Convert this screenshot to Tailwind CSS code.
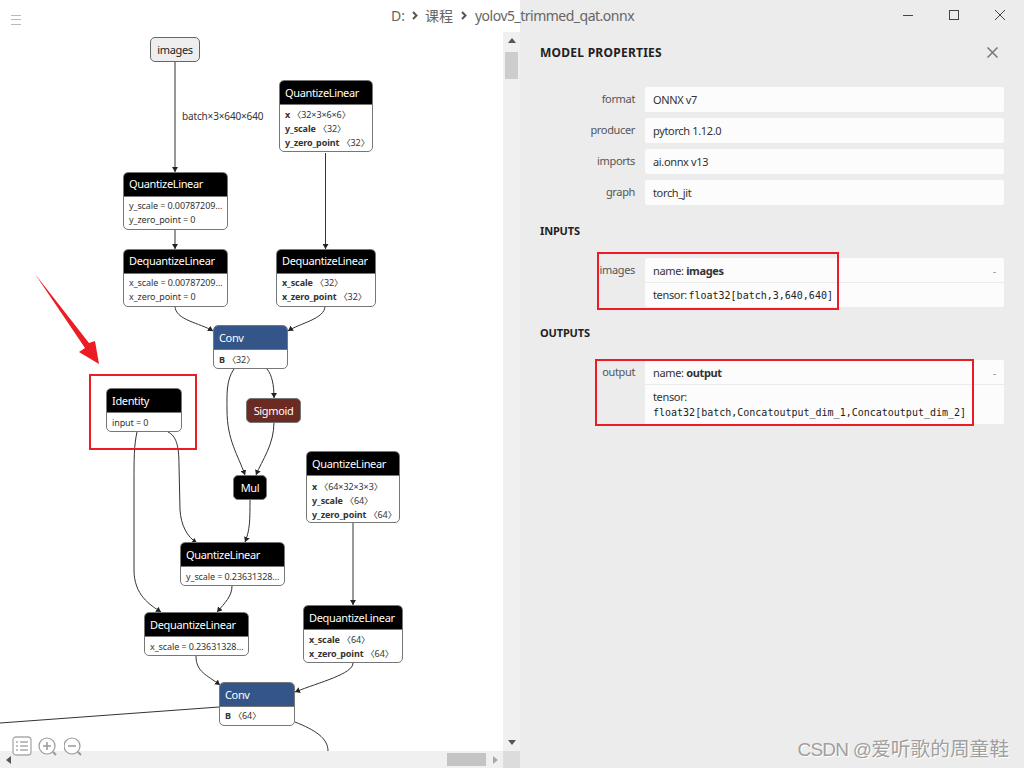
<!DOCTYPE html>
<html lang="en">
<head>
    <meta charset="UTF-8">
    <title>yolov5_trimmed_qat.onnx</title>
    <script src="https://cdn.jsdelivr.net/npm/@tailwindcss/browser@4"></script>
</head>
<body class="bg-white">
    <div class="relative flex w-[1024px] h-[768px] overflow-hidden font-['Noto_Sans','Noto_Sans_CJK_SC',sans-serif] text-[11px] tracking-[-0.35px] text-[#333]">

        <!-- left: graph + scrollbars -->
        <div class="relative flex flex-col w-[520px] h-full bg-white">
            <div class="flex flex-1 min-h-0">
                <div class="relative flex-1 overflow-hidden">
                    <svg class="absolute inset-0" width="503" height="751" fill="none" stroke="#333" stroke-width="1">
                        <defs>
                            <marker id="tip" markerWidth="6" markerHeight="6" refX="5" refY="3" orient="auto" markerUnits="userSpaceOnUse">
                                <path d="M0 0 L5 3 L0 6 Z" fill="#222" stroke="none"/>
                            </marker>
                        </defs>
                        <path marker-end="url(#tip)" d="M175 62 L175 172"/>
                        <path marker-end="url(#tip)" d="M175 229 L175 249"/>
                        <path marker-end="url(#tip)" d="M325.500 153 L325.500 249"/>
                        <path marker-end="url(#tip)" d="M175 306 C175 320 200 323 213 331"/>
                        <path marker-end="url(#tip)" d="M325 306 C325 319 300 323 288 331"/>
                        <path marker-end="url(#tip)" d="M234 369 C226 380 227 395 227 410 C227 440 238 455 245 475"/>
                        <path marker-end="url(#tip)" d="M267 369 C272 375 274 385 274 398"/>
                        <path marker-end="url(#tip)" d="M274 422 C274 445 262 460 256 475"/>
                        <path marker-end="url(#tip)" d="M250 499 C250 520 250 530 245 542"/>
                        <path marker-end="url(#tip)" d="M168 432 C176 436 179 445 179 465 L180 510 C181 525 187 537 197 543"/>
                        <path marker-end="url(#tip)" d="M137 432 C134 445 134 460 134 480 L134 570 C134 595 150 605 161 612"/>
                        <path marker-end="url(#tip)" d="M232 586 C232 596 225 603 217 612"/>
                        <path marker-end="url(#tip)" d="M353 523 L353 605"/>
                        <path marker-end="url(#tip)" d="M196 656 C196 672 207 675 220 685"/>
                        <path marker-end="url(#tip)" d="M353 663 C353 674 320 682 295 692"/>
                        <path d="M0 723 L219 707"/>
                        <path d="M295 722 C315 730 328 738 328 751"/>
                    </svg>

                    <span class="absolute left-[182px] top-[109px] text-[10px] tracking-[-0.15px] leading-[14px] whitespace-nowrap">batch×3×640×640</span>

                    <div class="absolute left-[150px] top-[37px] w-[50px] h-[25px] pt-[2px] flex items-center justify-center rounded-[5px] border border-[#666] bg-[#eee] text-[#222]">images</div>

                    <!-- QuantizeLinear -->
                    <div class="absolute left-[123px] top-[172px] w-[105px] rounded-[5px] border border-[#777] bg-white overflow-hidden">
                        <div class="h-[23px] bg-black text-white px-[5px] leading-[22px] border-b border-[#777] box-content">QuantizeLinear</div>
                        <div class="px-[5px] py-[2px] text-[9px] tracking-[-0.1px] leading-[14px] whitespace-nowrap">y_scale = 0.00787209…<br>y_zero_point = 0</div>
                    </div>
                    <div class="absolute left-[123px] top-[249px] w-[105px] rounded-[5px] border border-[#777] bg-white overflow-hidden">
                        <div class="h-[23px] bg-black text-white px-[5px] leading-[22px] border-b border-[#777] box-content">DequantizeLinear</div>
                        <div class="px-[5px] py-[2px] text-[9px] tracking-[-0.1px] leading-[14px] whitespace-nowrap">x_scale = 0.00787209…<br>x_zero_point = 0</div>
                    </div>
                    <div class="absolute left-[279px] top-[80px] w-[94px] rounded-[5px] border border-[#777] bg-white overflow-hidden">
                        <div class="h-[23px] bg-black text-white px-[5px] leading-[24px] border-b border-[#777] box-content">QuantizeLinear</div>
                        <div class="px-[5px] pt-[3px] pb-[1px] text-[9px] tracking-[-0.1px] leading-[14px] whitespace-nowrap"><b>x</b> 〈32×3×6×6〉<br><b>y_scale</b> 〈32〉<br><b>y_zero_point</b> 〈32〉</div>
                    </div>
                    <div class="absolute left-[276px] top-[249px] w-[100px] rounded-[5px] border border-[#777] bg-white overflow-hidden">
                        <div class="h-[23px] bg-black text-white px-[5px] leading-[22px] border-b border-[#777] box-content">DequantizeLinear</div>
                        <div class="px-[5px] py-[2px] text-[9px] tracking-[-0.1px] leading-[14px] whitespace-nowrap"><b>x_scale</b> 〈32〉<br><b>x_zero_point</b> 〈32〉</div>
                    </div>

                    <div class="absolute left-[213px] top-[325px] w-[75px] rounded-[5px] border border-[#777] bg-white overflow-hidden">
                        <div class="h-[23px] bg-[#335588] text-white px-[5px] leading-[24px] border-b border-[#777] box-content">Conv</div>
                        <div class="px-[5px] pt-[3px] pb-[1px] text-[9px] tracking-[-0.1px] leading-[14px] whitespace-nowrap"><b>B</b> 〈32〉</div>
                    </div>

                    <div class="absolute left-[106px] top-[388px] w-[76px] rounded-[5px] border border-[#777] bg-white overflow-hidden">
                        <div class="h-[23px] bg-black text-white px-[5px] leading-[24px] border-b border-[#777] box-content">Identity</div>
                        <div class="px-[5px] pt-[3px] pb-[1px] text-[9px] tracking-[-0.1px] leading-[14px] whitespace-nowrap">input = 0</div>
                    </div>

                    <div class="absolute left-[246px] top-[398px] w-[55px] h-[25px] pt-[2px] flex items-center justify-center rounded-[5px] border border-[#777] bg-[#6b2a22] text-white">Sigmoid</div>
                    <div class="absolute left-[233px] top-[475px] w-[34px] h-[25px] pt-[2px] flex items-center justify-center rounded-[5px] border border-[#777] bg-black text-white">Mul</div>

                    <div class="absolute left-[306px] top-[451px] w-[94px] rounded-[5px] border border-[#777] bg-white overflow-hidden">
                        <div class="h-[23px] bg-black text-white px-[5px] leading-[24px] border-b border-[#777] box-content">QuantizeLinear</div>
                        <div class="px-[5px] pt-[4px] text-[9px] tracking-[-0.1px] leading-[14px] whitespace-nowrap"><b>x</b> 〈64×32×3×3〉<br><b>y_scale</b> 〈64〉<br><b>y_zero_point</b> 〈64〉</div>
                    </div>
                    <div class="absolute left-[180px] top-[542px] w-[105px] rounded-[5px] border border-[#777] bg-white overflow-hidden">
                        <div class="h-[23px] bg-black text-white px-[5px] leading-[24px] border-b border-[#777] box-content">QuantizeLinear</div>
                        <div class="px-[5px] pt-[3px] pb-[1px] text-[9px] tracking-[-0.1px] leading-[14px] whitespace-nowrap">y_scale = 0.23631328…</div>
                    </div>
                    <div class="absolute left-[144px] top-[612px] w-[105px] rounded-[5px] border border-[#777] bg-white overflow-hidden">
                        <div class="h-[23px] bg-black text-white px-[5px] leading-[24px] border-b border-[#777] box-content">DequantizeLinear</div>
                        <div class="px-[5px] pt-[3px] pb-[1px] text-[9px] tracking-[-0.1px] leading-[14px] whitespace-nowrap">x_scale = 0.23631328…</div>
                    </div>
                    <div class="absolute left-[303px] top-[605px] w-[100px] rounded-[5px] border border-[#777] bg-white overflow-hidden">
                        <div class="h-[23px] bg-black text-white px-[5px] leading-[24px] border-b border-[#777] box-content">DequantizeLinear</div>
                        <div class="px-[5px] pt-[3px] pb-[1px] text-[9px] tracking-[-0.1px] leading-[14px] whitespace-nowrap"><b>x_scale</b> 〈64〉<br><b>x_zero_point</b> 〈64〉</div>
                    </div>
                    <div class="absolute left-[219px] top-[682px] w-[76px] rounded-[5px] border border-[#777] bg-white overflow-hidden">
                        <div class="h-[23px] bg-[#335588] text-white px-[5px] leading-[24px] border-b border-[#777] box-content">Conv</div>
                        <div class="px-[5px] py-[2px] text-[9px] tracking-[-0.1px] leading-[14px] whitespace-nowrap"><b>B</b> 〈64〉</div>
                    </div>
                </div>

                <!-- vertical scrollbar -->
                <div class="w-[17px] pt-8 flex flex-col">
                    <div class="flex-1 bg-[#f0f0f0] flex flex-col items-center relative">
                        <svg class="mt-[6px]" width="8" height="5"><path d="M0 5 L4 0 L8 5 Z" fill="#555"/></svg>
                        <div class="mt-[9px] w-[13px] h-[27px] bg-[#cdcdcd]"></div>
                        <svg class="mt-auto mb-[6px]" width="8" height="5"><path d="M0 0 L4 5 L8 0 Z" fill="#555"/></svg>
                    </div>
                </div>
            </div>

            <!-- horizontal scrollbar -->
            <div class="h-[17px] flex bg-[#f0f0f0] items-center">
                <svg class="ml-[6px]" width="5" height="8"><path d="M5 0 L0 4 L5 8 Z" fill="#555"/></svg>
                <div class="ml-[436px] w-[39px] h-[13px] bg-[#c4c4c4]"></div>
                <svg class="ml-[7px]" width="5" height="8"><path d="M0 0 L5 4 L0 8 Z" fill="#a8a8a8"/></svg>
                <div class="ml-auto w-[17px] h-full bg-[#dcdcdc]"></div>
            </div>

            <!-- menu + zoom buttons -->
            <svg class="absolute left-[10px] top-[14px]" width="13" height="12" fill="none" stroke="#bbb" stroke-width="1"><path d="M1 1.500 H11 M1 5.500 H11 M1 10.500 H11"/></svg>
            <div class="absolute left-[12px] top-[736px] flex gap-[6px]">
                <svg width="20" height="20" fill="#fff" stroke="#aaa" stroke-width="1.300"><rect x="1" y="1" width="18" height="18" rx="3"/><path stroke="#aaa" stroke-width="1.500" d="M4 6 H6 M8 6 H16 M4 10 H6 M8 10 H16 M4 14 H6 M8 14 H16"/></svg>
                <svg width="20" height="20" fill="#fff" stroke="#999" stroke-width="1.200"><circle cx="9" cy="10" r="8"/><path stroke-width="1.500" d="M5 10 H13 M9 6 V14"/><path stroke-width="2" d="M15 16 L18 19"/></svg>
                <svg width="20" height="20" fill="#fff" stroke="#999" stroke-width="1.200"><circle cx="8" cy="10" r="8"/><path stroke-width="1.500" d="M4 10 H12"/><path stroke-width="2" d="M14 16 L17 19"/></svg>
            </div>
        </div>

        <!-- right: model properties -->
        <div class="flex flex-col flex-1 bg-[#ececec] pt-[43px] pl-5 pr-5">
            <div class="flex items-center justify-between h-[18px] mb-[26px] pr-[6px]">
                <span class="pt-[2px] font-bold text-[12px] tracking-[0.25px] text-[#222]">MODEL PROPERTIES</span>
                <svg width="11" height="11" fill="none" stroke="#777" stroke-width="1.500"><path d="M0.500 0.500 L10.500 10.500 M10.500 0.500 L0.500 10.500"/></svg>
            </div>

            <div class="flex flex-col gap-[6px]">
                <div class="flex gap-[10px]">
                    <div class="w-[95px] text-right leading-[24px] text-[#555]">format</div>
                    <div class="flex-1 h-[25px] rounded-[2px] bg-[#fcfcfc] px-2 leading-[25px]">ONNX v7</div>
                </div>
                <div class="flex gap-[10px]">
                    <div class="w-[95px] text-right leading-[24px] text-[#555]">producer</div>
                    <div class="flex-1 h-[25px] rounded-[2px] bg-[#fcfcfc] px-2 leading-[25px]">pytorch 1.12.0</div>
                </div>
                <div class="flex gap-[10px]">
                    <div class="w-[95px] text-right leading-[24px] text-[#555]">imports</div>
                    <div class="flex-1 h-[25px] rounded-[2px] bg-[#fcfcfc] px-2 leading-[25px]">ai.onnx v13</div>
                </div>
                <div class="flex gap-[10px]">
                    <div class="w-[95px] text-right leading-[24px] text-[#555]">graph</div>
                    <div class="flex-1 h-[25px] rounded-[2px] bg-[#fcfcfc] px-2 leading-[25px]">torch_jit</div>
                </div>
            </div>

            <div class="mt-[17px] mb-[18px] h-[18px] leading-[18px] font-bold tracking-[-0.15px] text-[#222]">INPUTS</div>
            <div class="flex gap-[10px]">
                <div class="w-[95px] text-right leading-[24px] text-[#555]">images</div>
                <div class="flex-1 h-[49px] rounded-[2px] bg-[#fcfcfc]">
                    <div class="flex justify-between h-[25px] px-2 leading-[25px] border-b border-[#ececec]"><span>name: <b>images</b></span><span class="text-[#999]">-</span></div>
                    <div class="px-2 leading-[24px]">tensor: <code class="-ml-[1px] font-['DejaVu_Sans_Mono',monospace] text-[10px] tracking-normal text-[#222]">float32[batch,3,640,640]</code></div>
                </div>
            </div>

            <div class="mt-[17px] mb-[18px] h-[18px] leading-[18px] font-bold tracking-[-0.15px] text-[#222]">OUTPUTS</div>
            <div class="flex gap-[10px]">
                <div class="w-[95px] text-right leading-[24px] text-[#555]">output</div>
                <div class="flex-1 h-[64px] rounded-[2px] bg-[#fcfcfc]">
                    <div class="flex justify-between h-[25px] px-2 leading-[25px] border-b border-[#ececec]"><span>name: <b>output</b></span><span class="text-[#999]">-</span></div>
                    <div class="px-2 pt-[4px] leading-[15px]">tensor:<br><code class="font-['DejaVu_Sans_Mono',monospace] text-[10px] tracking-normal text-[#222] whitespace-nowrap">float32[batch,Concatoutput_dim_1,Concatoutput_dim_2]</code></div>
                </div>
            </div>
        </div>

        <!-- title bar -->
        <div class="absolute left-[391px] top-[5px] flex items-center h-5 text-[14px] tracking-normal text-[#666] whitespace-nowrap">
            <span>D:</span>
            <svg class="mx-[7px]" width="6" height="9" fill="none" stroke="#555" stroke-width="2"><path d="M1 1 L4.500 4.500 L1 8"/></svg>
            <span>课程</span>
            <svg class="ml-[8px] mr-[8px]" width="6" height="9" fill="none" stroke="#555" stroke-width="2"><path d="M1 1 L4.500 4.500 L1 8"/></svg>
            <span class="tracking-[-0.5px]">yolov5_trimmed_qat.onnx</span>
        </div>
        <div class="absolute right-[19px] top-[10px] flex gap-[36px]">
            <svg width="10" height="10" fill="none" stroke="#444"><path d="M0 5.500 H10"/></svg>
            <svg width="10" height="10" fill="none" stroke="#444"><rect x="0.500" y="0.500" width="9" height="9"/></svg>
            <svg width="10" height="10" fill="none" stroke="#444"><path d="M0 0 L10 10 M10 0 L0 10"/></svg>
        </div>

        <!-- annotations -->
        <div class="absolute left-[89px] top-[374px] w-[108px] h-[76px] border-2 border-[#ed1c24]"></div>
        <div class="absolute left-[597px] top-[252px] w-[242px] h-[58px] border-2 border-[#ed1c24]"></div>
        <div class="absolute left-[595px] top-[359px] w-[379px] h-[67px] border-2 border-[#ed1c24]"></div>
        <svg class="absolute left-0 top-0" width="110" height="370"><path d="M35 274 L89 343 L95 341 L99 364 L79 352 L85 348 Z" fill="#ed1c24"/></svg>

        <div class="absolute right-[15px] top-[736px] leading-[26px] text-[#a0a0a0] [text-shadow:1px_1px_0_#fff] whitespace-nowrap font-['Liberation_Sans','Noto_Sans_CJK_SC',sans-serif]"><span class="text-[19px] tracking-[-0.8px]">CSDN @</span><span class="text-[19.7px] tracking-normal">爱听歌的周童鞋</span></div>
    </div>
</body>
</html>
